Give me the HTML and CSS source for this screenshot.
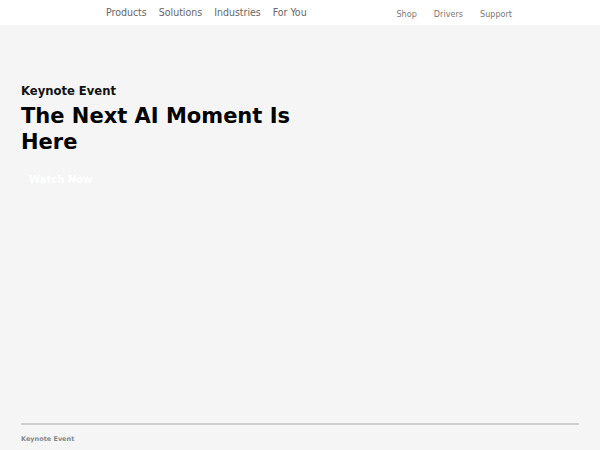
FILE: index.html
```html
<!DOCTYPE html>
<html lang="en">
<head>
    <meta charset="UTF-8">
    <meta name="viewport" content="width=device-width, initial-scale=1.0">
    <title>Keynote Event</title>
    <link rel="stylesheet" href="styles.css">
</head>
<body>
    <header class="topbar">
        <nav class="main-nav">
            <a href="#">Products</a>
            <a href="#">Solutions</a>
            <a href="#">Industries</a>
            <a href="#">For You</a>
        </nav>
        <nav class="util-nav">
            <a href="#">Shop</a>
            <a href="#">Drivers</a>
            <a href="#">Support</a>
        </nav>
    </header>

    <main class="hero">
        <div class="hero-text">
            <p class="eyebrow">Keynote Event</p>
            <h1>The Next AI Moment Is Here</h1>
            <a class="watch-btn" href="#">Watch Now</a>
        </div>
        <div class="hero-foot">
            <div class="progress"></div>
            <p class="foot-label">Keynote Event</p>
        </div>
    </main>
</body>
</html>
```

FILE: styles.css
```css
body {
    margin: 0;
    font-family: "DejaVu Sans", sans-serif;
    background-color: #f5f5f5;
}
a {
    text-decoration: none;
}
.topbar {
    height: 25px;
    background-color: #ffffff;
    display: flex;
    align-items: center;
    font-family: "DejaVu Sans Condensed", "DejaVu Sans", sans-serif;
}
.main-nav {
    display: flex;
    gap: 12px;
    margin-left: 106px;
    padding-bottom: 2px;
}
.main-nav a {
    color: #666;
    font-size: 10.5px;
}
.util-nav {
    display: flex;
    gap: 17px;
    margin-left: auto;
    margin-right: 88px;
    padding-top: 2px;
}
.util-nav a {
    color: #777;
    font-size: 9px;
}
.hero {
    height: 425px;
    display: flex;
    flex-direction: column;
    padding: 0 21px;
}
.hero-text {
    padding-top: 59px;
    width: 300px;
}
.eyebrow {
    margin: 0;
    font-size: 11.6px;
    font-weight: bold;
    color: #111;
}
h1 {
    margin: 6px 0 0;
    font-size: 21px;
    line-height: 25.5px;
    color: #000;
}
.watch-btn {
    display: inline-block;
    margin-top: 17px;
    padding: 2px 8px;
    color: #ffffff;
    font-size: 10px;
    font-weight: bold;
}
.hero-foot {
    margin-top: auto;
    padding-bottom: 7px;
}
.progress {
    height: 2px;
    background-color: #cfcfcf;
}
.foot-label {
    margin: 10px 0 0;
    font-size: 6.5px;
    font-weight: bold;
    color: #888;
}
```
